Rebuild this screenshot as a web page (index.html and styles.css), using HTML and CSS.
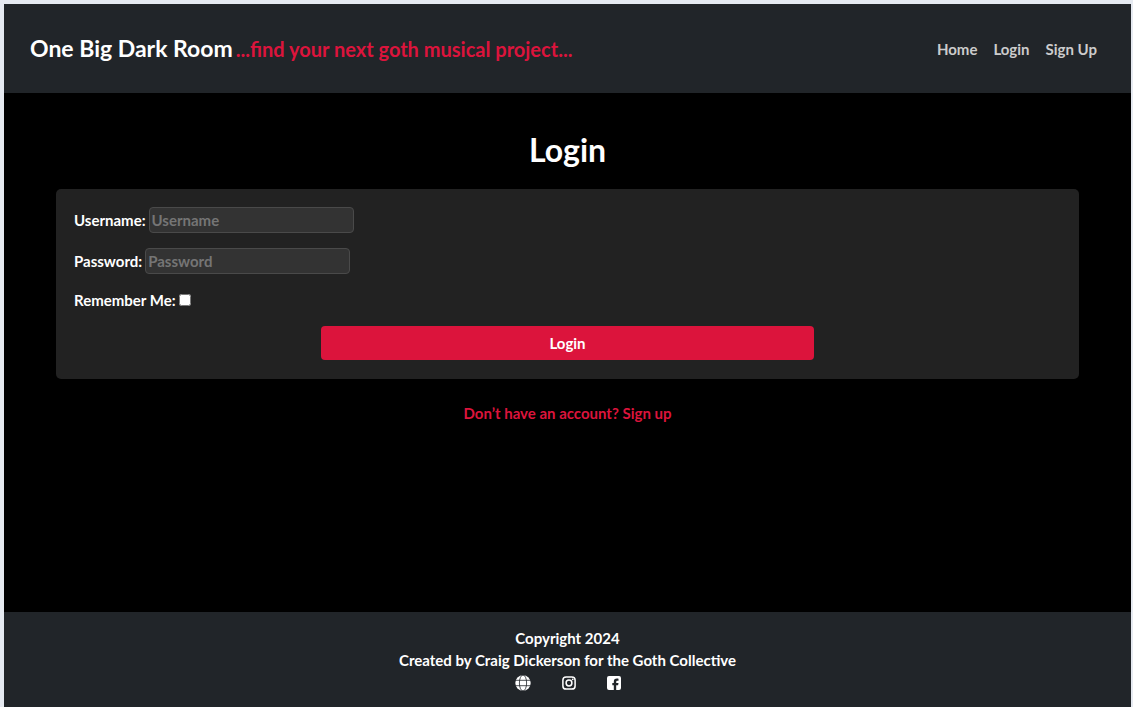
FILE: index.html
```html
<!DOCTYPE html>
<html lang="en">
<head>
<meta charset="utf-8">
<title>Login - One Big Dark Room</title>
<link rel="stylesheet" href="styles.css">
</head>
<body>
<div class="page">
  <header class="header">
    <div class="brand"><a class="brand-name" href="#">One Big Dark Room</a><span class="tagline">...find your next goth musical project...</span></div>
    <nav class="nav"><a href="#">Home</a><a href="#">Login</a><a href="#">Sign Up</a></nav>
  </header>
  <main class="main">
    <h1 class="title">Login</h1>
    <form class="form">
      <div class="field"><label for="username">Username:</label><input class="text-input" id="username" type="text" placeholder="Username"></div>
      <div class="field"><label for="password">Password:</label><input class="text-input" id="password" type="password" placeholder="Password"></div>
      <div class="field"><label for="remember">Remember Me:</label><input class="check" id="remember" type="checkbox"></div>
      <button class="submit" type="submit">Login</button>
    </form>
    <a class="signup" href="#">Don’t have an account? Sign up</a>
  </main>
  <footer class="footer">
    <p>Copyright 2024</p>
    <p>Created by Craig Dickerson for the Goth Collective</p>
    <div class="social">
      <a href="#" aria-label="Website"><svg width="16" height="16" viewBox="0 0 16 16"><circle cx="8" cy="8" r="7.7" fill="#fff"/><g fill="none" stroke="#212529" stroke-width=".8"><ellipse cx="8" cy="8" rx="3.6" ry="8"/><path d="M0 5.3h16M0 10.7h16"/></g></svg></a>
      <a href="#" aria-label="Instagram"><svg width="14" height="16" viewBox="0 0 14 16"><g fill="none" stroke="#fff" stroke-width="1.5"><rect x=".9" y="1.9" width="12.2" height="12.2" rx="3.2"/><circle cx="7" cy="8" r="2.9"/></g><circle cx="10.7" cy="4.3" r=".9" fill="#fff"/></svg></a>
      <a href="#" aria-label="Facebook"><svg width="14" height="16" viewBox="0 0 14 16"><path fill="#fff" fill-rule="evenodd" d="M2 1h10a2 2 0 0 1 2 2v10a2 2 0 0 1-2 2H9.200V10.300h1.900l.4-2.200H9.200V7.300c0-1.100.4-1.500 1.500-1.500h.8V3.800c-.3-.1-1-.2-1.500-.2-2.200 0-3.200 1-3.200 3.300v1.200H5.300v2.200h1.500V15H2a2 2 0 0 1-2-2V3a2 2 0 0 1 2-2z"/></svg></a>
    </div>
  </footer>
</div>
</body>
</html>
```
FILE: styles.css
```css
* { box-sizing: border-box; }
body {
  margin: 0;
  background: #e6eaf1;
  color: #fff;
  font: 700 15px/22px Lato, "Noto Sans", sans-serif;
}
a { color: inherit; text-decoration: none; }
.page {
  display: flex;
  flex-direction: column;
  min-height: 100vh;
  border: solid #e6eaf1;
  border-width: 4px 2px 0 4px;
  background: #000;
}
.header {
  display: flex;
  align-items: center;
  justify-content: space-between;
  padding: 24px 34px 24px 26px;
  background: #212529;
}
.brand { display: flex; align-items: baseline; gap: 3px; line-height: 40px; font-size: 20px; }
.brand-name { font-size: 23px; }
.tagline { color: #dc143c; }
.nav { display: flex; gap: 16px; color: #ccc; }
.main {
  flex: 1;
  display: flex;
  flex-direction: column;
  align-items: center;
  padding: 37px 52px;
}
.title { margin: 0 0 19px; font-size: 32px; line-height: 40px; }
.form {
  align-self: stretch;
  display: flex;
  flex-direction: column;
  padding: 18px 18px 19px;
  border-radius: 5px;
  background: #222;
}
.field { display: flex; align-items: center; gap: 3px; margin-bottom: 15px; }
.text-input {
  width: 205px;
  height: 26px;
  padding: 1px 2px;
  border: 1px solid #4a4a4a;
  border-radius: 4px;
  background: #333;
  color: #fff;
  font: inherit;
}
.text-input::placeholder { color: #757575; }
.check { width: 12px; height: 12px; margin: 0; }
.submit {
  align-self: center;
  width: 50%;
  padding: 6px;
  border: 0;
  border-radius: 4px;
  background: #dc143c;
  color: #fff;
  font: inherit;
}
.signup { margin-top: 23px; color: #dc143c; }
.footer {
  display: flex;
  flex-direction: column;
  align-items: center;
  padding: 15px 0 14px;
  background: #212529;
}
.footer p { margin: 0; }
.social { display: flex; gap: 31px; }
.social a, .social svg { display: block; }
.social a { padding: 4px 0 2px; }
```
